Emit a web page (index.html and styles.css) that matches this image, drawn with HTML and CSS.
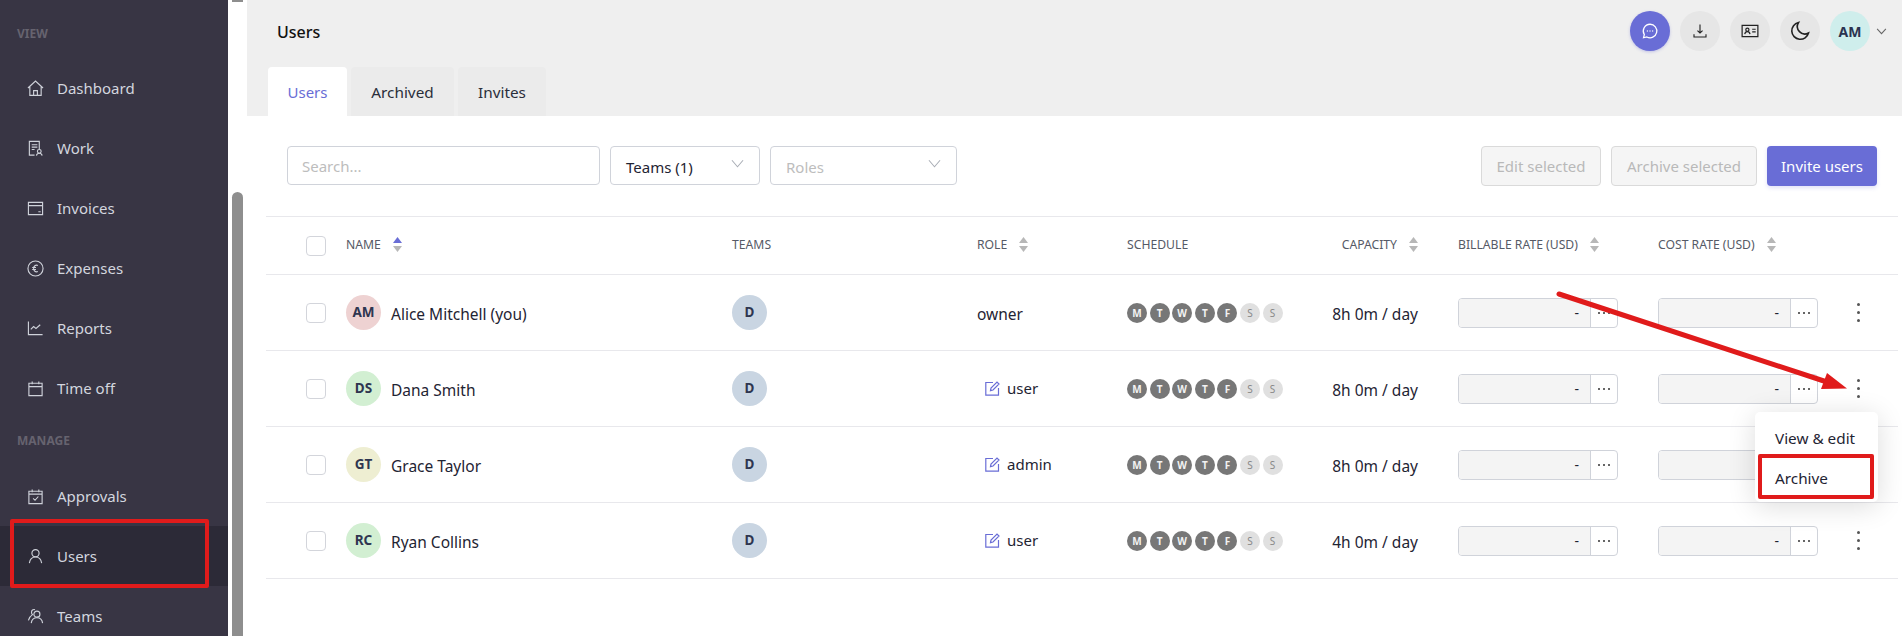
FILE: index.html
```html
<!DOCTYPE html>
<html lang="en">
<head>
    <meta charset="UTF-8">
    <title>Users</title>
    <link rel="stylesheet" href="styles.css">
</head>
<body>
<div class="page">
    <aside class="sidebar">
        <div class="nav-label nav-label-view">VIEW</div>
        <a class="nav-item"><svg class="nav-icon" viewBox="0 0 18 18"><path d="M1 8.500 9 1.200l8 7.300M3 7v9.300h12V7M7 16.300v-5h4v5"/></svg>Dashboard</a>
        <a class="nav-item"><svg class="nav-icon" viewBox="0 0 18 18"><path d="M8 16H2.500V1.500h10.500v8M5 5h6M5 7.500h6M5 10h3"/><circle cx="13" cy="12" r="2"/><path d="M10 16.500c.3-2 1.500-2.500 3-2.500s2.700.5 3 2.500"/></svg>Work</a>
        <a class="nav-item"><svg class="nav-icon" viewBox="0 0 18 18"><path d="M1.500 2.500h15v13h-15zM1.500 6h15M12 12.500h2.500"/></svg>Invoices</a>
        <a class="nav-item"><svg class="nav-icon" viewBox="0 0 18 18"><circle cx="9" cy="9" r="8"/><path d="M11.500 5.800C9 4.700 7 6.500 7 9s2 4.300 4.500 3.200M5.500 8h4M5.500 10h4"/></svg>Expenses</a>
        <a class="nav-item"><svg class="nav-icon" viewBox="0 0 18 18"><path d="M1.500 1.500v14h15M4 10l3-3 2.500 2 4.500-4"/></svg>Reports</a>
        <a class="nav-item"><svg class="nav-icon" viewBox="0 0 18 18"><path d="M2 3.500h14v13H2zM2 7h14M5.500 1.500v3M12.500 1.500v3"/></svg>Time off</a>
        <div class="nav-label">MANAGE</div>
        <a class="nav-item"><svg class="nav-icon" viewBox="0 0 18 18"><path d="M2 3.500h14v13H2zM2 6.500h14M5.500 1.500v3M12.500 1.500v3M6.500 11l2 2 3.500-4"/></svg>Approvals</a>
        <a class="nav-item nav-item-active"><svg class="nav-icon" viewBox="0 0 18 18"><circle cx="9" cy="5.500" r="3.800"/><path d="M2.500 16c.5-4 3-6.500 6.500-6.500s6 2.500 6.500 6.500"/></svg>Users</a>
        <a class="nav-item"><svg class="nav-icon" viewBox="0 0 18 18"><circle cx="10.500" cy="6.500" r="3.200"/><path d="M4.500 16c.4-3.500 2.700-5.700 6-5.700s5.600 2.200 6 5.700M8.500 1.800C6.500 1 4.500 2.500 4.800 5c.1 1 .5 1.500 1 2C3.500 8.500 2 10.500 1.500 13"/></svg>Teams</a>
    </aside>

    <div class="scrollbar">
        <div class="scrollbar-top"></div>
        <div class="scrollbar-thumb"></div>
    </div>

    <main class="content">
        <header class="topbar">
            <div class="topbar-row">
                <h1 class="page-title">Users</h1>
                <div class="topbar-actions">
                    <button class="round-btn round-btn-primary"><svg viewBox="0 0 20 20" width="18" height="18"><path class="icon-line-light" d="M10 2.500a7.500 7.500 0 1 1-3.500 14.100L2.800 17.500l.9-3.500A7.500 7.500 0 0 1 10 2.500z"/><path class="icon-dots-light" d="M6.500 10h1M9.500 10h1M12.500 10h1"/></svg></button>
                    <button class="round-btn"><svg viewBox="0 0 20 20" width="16" height="16"><path class="icon-line" d="M10 2v10M6.800 9.500 10 12.500l3.200-3M2.500 14v3.500h15V14"/></svg></button>
                    <button class="round-btn"><svg viewBox="0 0 20 16" width="18" height="14"><path class="icon-line" d="M1 1.500h18v13H1z"/><circle class="icon-line" cx="7" cy="6.500" r="1.800"/><path class="icon-line" d="M4 11.500c.3-2 1.500-2.800 3-2.800s2.700.8 3 2.800M12.500 6h4M12.500 9h4"/></svg></button>
                    <button class="round-btn"><svg viewBox="0 0 20 20" width="20" height="20"><path class="icon-line-bold" d="M8.500 1.500a8.500 8.500 0 1 0 10 10.500A7.500 7.500 0 0 1 8.500 1.500z"/></svg></button>
                    <div class="round-btn user-badge">AM</div>
                    <svg class="user-chevron" viewBox="0 0 12 8" width="11" height="7"><path d="M1 1l5 5.500L11 1"/></svg>
                </div>
            </div>
            <nav class="tabs">
                <a class="tab tab-users">Users</a>
                <a class="tab tab-archived">Archived</a>
                <a class="tab tab-invites">Invites</a>
            </nav>
        </header>

        <section class="panel">
            <div class="toolbar">
                <input class="search" type="text" placeholder="Search...">
                <div class="select select-teams"><span>Teams (1)</span><svg class="select-arrow" viewBox="0 0 14 9" width="13" height="9"><path d="M1 1l6 7 6-7"/></svg></div>
                <div class="select select-roles"><span class="select-placeholder">Roles</span><svg class="select-arrow" viewBox="0 0 14 9" width="13" height="9"><path d="M1 1l6 7 6-7"/></svg></div>
                <div class="toolbar-actions">
                    <button class="btn btn-disabled btn-edit">Edit selected</button>
                    <button class="btn btn-disabled btn-archive">Archive selected</button>
                    <button class="btn btn-primary">Invite users</button>
                </div>
            </div>

            <div class="table">
                <div class="row row-head">
                    <span class="checkbox"></span>
                    <span class="th">NAME<svg class="sort" viewBox="0 0 9 15"><path class="sort-on" d="M4.500 0 9 6H0z"/><path d="M0 9h9l-4.500 6z"/></svg></span>
                    <span class="th">TEAMS</span>
                    <span class="th">ROLE<svg class="sort" viewBox="0 0 9 15"><path d="M4.500 0 9 6H0z"/><path d="M0 9h9l-4.500 6z"/></svg></span>
                    <span class="th">SCHEDULE</span>
                    <span class="th th-capacity">CAPACITY<svg class="sort" viewBox="0 0 9 15"><path d="M4.500 0 9 6H0z"/><path d="M0 9h9l-4.500 6z"/></svg></span>
                    <span class="th">BILLABLE RATE (USD)<svg class="sort" viewBox="0 0 9 15"><path d="M4.500 0 9 6H0z"/><path d="M0 9h9l-4.500 6z"/></svg></span>
                    <span class="th">COST RATE (USD)<svg class="sort" viewBox="0 0 9 15"><path d="M4.500 0 9 6H0z"/><path d="M0 9h9l-4.500 6z"/></svg></span>
                </div>

                <div class="row">
                    <span class="checkbox"></span>
                    <div class="name-cell"><span class="avatar avatar-red">AM</span><span class="cell-text">Alice Mitchell (you)</span></div>
                    <span class="avatar avatar-blue">D</span>
                    <span class="cell-text">owner</span>
                    <div class="days"><i>M</i><i>T</i><i>W</i><i>T</i><i>F</i><i class="off">S</i><i class="off">S</i></div>
                    <span class="cell-text capacity">8h 0m / day</span>
                    <div class="rate"><span class="rate-value">-</span><span class="rate-more"><b></b><b></b><b></b></span></div>
                    <div class="rate"><span class="rate-value">-</span><span class="rate-more"><b></b><b></b><b></b></span></div>
                    <span class="kebab"><b></b><b></b><b></b></span>
                </div>

                <div class="row">
                    <span class="checkbox"></span>
                    <div class="name-cell"><span class="avatar avatar-green">DS</span><span class="cell-text">Dana Smith</span></div>
                    <span class="avatar avatar-blue">D</span>
                    <span class="role-edit"><svg viewBox="0 0 15 15" width="15" height="15"><path d="M8 1.500H.8v12.700h12.700V7M5.500 9.700l.5-2.700L12 1l2 2-6 6z"/></svg>user</span>
                    <div class="days"><i>M</i><i>T</i><i>W</i><i>T</i><i>F</i><i class="off">S</i><i class="off">S</i></div>
                    <span class="cell-text capacity">8h 0m / day</span>
                    <div class="rate"><span class="rate-value">-</span><span class="rate-more"><b></b><b></b><b></b></span></div>
                    <div class="rate"><span class="rate-value">-</span><span class="rate-more"><b></b><b></b><b></b></span></div>
                    <span class="kebab"><b></b><b></b><b></b></span>
                </div>

                <div class="row">
                    <span class="checkbox"></span>
                    <div class="name-cell"><span class="avatar avatar-yellow">GT</span><span class="cell-text">Grace Taylor</span></div>
                    <span class="avatar avatar-blue">D</span>
                    <span class="role-edit"><svg viewBox="0 0 15 15" width="15" height="15"><path d="M8 1.500H.8v12.700h12.700V7M5.500 9.700l.5-2.700L12 1l2 2-6 6z"/></svg>admin</span>
                    <div class="days"><i>M</i><i>T</i><i>W</i><i>T</i><i>F</i><i class="off">S</i><i class="off">S</i></div>
                    <span class="cell-text capacity">8h 0m / day</span>
                    <div class="rate"><span class="rate-value">-</span><span class="rate-more"><b></b><b></b><b></b></span></div>
                    <!-- value of this one sits under the open menu -->
                    <div class="rate"><span class="rate-value"></span><span class="rate-more"></span></div>
                    <span class="kebab"><b></b><b></b><b></b></span>
                </div>

                <div class="row">
                    <span class="checkbox"></span>
                    <div class="name-cell"><span class="avatar avatar-green">RC</span><span class="cell-text">Ryan Collins</span></div>
                    <span class="avatar avatar-blue">D</span>
                    <span class="role-edit"><svg viewBox="0 0 15 15" width="15" height="15"><path d="M8 1.500H.8v12.700h12.700V7M5.500 9.700l.5-2.700L12 1l2 2-6 6z"/></svg>user</span>
                    <div class="days"><i>M</i><i>T</i><i>W</i><i>T</i><i>F</i><i class="off">S</i><i class="off">S</i></div>
                    <span class="cell-text capacity">4h 0m / day</span>
                    <div class="rate"><span class="rate-value">-</span><span class="rate-more"><b></b><b></b><b></b></span></div>
                    <div class="rate"><span class="rate-value">-</span><span class="rate-more"><b></b><b></b><b></b></span></div>
                    <span class="kebab"><b></b><b></b><b></b></span>
                </div>
            </div>
        </section>
    </main>

    <!-- Row menu, open on Dana Smith -->
    <div class="row-menu">
        <a class="row-menu-item">View &amp; edit</a>
        <a class="row-menu-item">Archive</a>
    </div>

    <!-- Red annotations drawn on top of the screenshot -->
    <div class="mark mark-users"></div>
    <div class="mark mark-archive"></div>
    <svg class="mark-arrow" viewBox="0 0 1902 636" width="1902" height="636">
        <path class="arrow-line" d="M1559 294 1830 383"/>
        <path class="arrow-head" d="M1847 388.500 1827 373 1821 389z"/>
    </svg>
</div>
</body>
</html>
```

FILE: styles.css
```css
* {
    box-sizing: border-box;
}
body {
    margin: 0;
    font-family: "Noto Sans", Arial, sans-serif;
    font-size: 15px;
    color: #1f2433;
    background: #fff;
}
.page {
    position: relative;
    display: flex;
    width: 1902px;
    height: 636px;
    overflow: hidden;
}

/* Sidebar */
.sidebar {
    flex: 0 0 228px;
    height: 636px;
    background: #383544;
    color: #d3d6df;
    overflow: hidden;
}
.nav-label {
    height: 48px;
    padding: 15px 0 0 17px;
    font-size: 12px;
    font-weight: 700;
    line-height: 16px;
    color: #66636f;
}
.nav-label-view {
    height: 58px;
    padding-top: 26px;
}
.nav-item {
    display: flex;
    align-items: center;
    gap: 13px;
    height: 60px;
    padding-left: 27px;
    font-size: 15px;
}
.nav-item-active {
    background: #2c2a37;
}
.nav-icon {
    flex: 0 0 17px;
    width: 17px;
    height: 17px;
    fill: none;
    stroke: #cfd2da;
    stroke-width: 1.2;
}

/* Fake page scrollbar */
.scrollbar {
    flex: 0 0 19px;
    padding-left: 4px;
}
.scrollbar-top {
    width: 11px;
    height: 2px;
    background: #8e8e8e;
}
.scrollbar-thumb {
    width: 11px;
    height: 460px;
    margin-top: 190px;
    border-radius: 6px 6px 0 0;
    background: #8e8e8e;
}

/* Top bar and tabs */
.content {
    flex: 1;
    min-width: 0;
}
.topbar {
    height: 116px;
    padding-left: 21px;
    background: #efefef;
}
.topbar-row {
    display: flex;
    justify-content: space-between;
    height: 67px;
    padding-top: 11px;
}
.page-title {
    margin: 9px 0 0 9px;
    font-size: 16px;
    font-weight: 500;
    line-height: 24px;
    color: #111;
}
.topbar-actions {
    display: flex;
    align-items: flex-start;
    gap: 10px;
    padding-right: 15px;
}
.round-btn {
    display: flex;
    align-items: center;
    justify-content: center;
    width: 40px;
    height: 40px;
    padding: 0;
    border: none;
    border-radius: 50%;
    background: #e6e6e6;
}
.round-btn-primary {
    background: #696dd6;
    box-shadow: 0 1px 3px rgba(105,109,214,0.35);
}
.icon-line,
.icon-line-light,
.icon-line-bold,
.icon-dots-light {
    fill: none;
    stroke: #222;
    stroke-width: 1.4;
}
.icon-line-bold {
    stroke-width: 1.6;
}
.icon-line-light {
    stroke: #fff;
}
.icon-dots-light {
    stroke: #fff;
    stroke-width: 1.8;
}
.user-badge {
    font-size: 14px;
    font-weight: 700;
    color: #2b3350;
    background: #cfeeec;
}
.user-chevron {
    margin: 17px 0 0 -4px;
    fill: none;
    stroke: #666;
    stroke-width: 1.2;
}
.tabs {
    display: flex;
    gap: 4px;
    height: 49px;
}
.tab {
    display: flex;
    align-items: center;
    justify-content: center;
    height: 49px;
    border-radius: 4px 4px 0 0;
    font-size: 15.300px;
    background: #ebebeb;
    color: #2a2e3a;
}
.tab-users {
    width: 79px;
    font-size: 15px;
    background: #fff;
    color: #696dd6;
}
.tab-archived {
    width: 103px;
}
.tab-invites {
    width: 88px;
}

/* Filters */
.panel {
    padding: 30px 4px 0 19px;
}
.toolbar {
    display: flex;
    gap: 10px;
    height: 70px;
    padding-left: 21px;
    padding-right: 21px;
}
.search,
.select {
    height: 39px;
    border: 1px solid #d0d3da;
    border-radius: 4px;
    background: #fff;
    font-family: inherit;
    font-size: 15px;
}
.search {
    width: 313px;
    padding: 0 14px;
    outline: none;
}
.search::placeholder,
.select-placeholder {
    color: #bdbdbd;
}
.select {
    display: flex;
    align-items: center;
    justify-content: space-between;
    padding: 2px 15px 0;
}
.select-teams {
    width: 150px;
}
.select-roles {
    width: 187px;
}
.select-arrow {
    margin-top: -6px;
    fill: none;
    stroke: #a9adb5;
    stroke-width: 1.1;
}
.toolbar-actions {
    display: flex;
    gap: 10px;
    margin-left: auto;
}
.btn {
    height: 40px;
    padding: 0;
    border-radius: 4px;
    font-family: inherit;
    font-size: 15px;
}
.btn-disabled {
    border: 1px solid #dadada;
    background: #f5f5f5;
    color: #b9b9b9;
}
.btn-edit {
    width: 120px;
}
.btn-archive {
    width: 146px;
}
.btn-primary {
    width: 110px;
    border: none;
    background: #696dd6;
    color: #fff;
    box-shadow: 0 2px 4px rgba(105,109,214,0.2);
}

/* Users table */
.table {
    border-top: 1px solid #e8e8ec;
}
.row {
    display: grid;
    grid-template-columns: 40px 386px 245px 150px 183px 148px 200px 182px 36px;
    align-items: center;
    height: 76px;
    padding-left: 40px;
    border-bottom: 1px solid #e8e8ec;
}
.row-head {
    height: 58px;
}
.checkbox {
    display: block;
    width: 20px;
    height: 20px;
    border: 1px solid #d3d5db;
    border-radius: 4px;
    background: #fff;
}
.th {
    display: flex;
    align-items: center;
    gap: 12px;
    padding-bottom: 2px;
    font-size: 12.200px;
    color: #565a66;
}
.th-capacity {
    justify-content: flex-end;
    padding-right: 40px;
}
.sort {
    flex: 0 0 9px;
    width: 9px;
    height: 15px;
    fill: #b7b7b7;
}
.sort-on {
    fill: #696dd6;
}
.name-cell {
    display: flex;
    align-items: center;
    gap: 10px;
}
.cell-text {
    padding-top: 3px;
    font-size: 15.500px;
}
.avatar {
    display: flex;
    align-items: center;
    justify-content: center;
    width: 35px;
    height: 35px;
    padding-bottom: 2px;
    border-radius: 50%;
    font-size: 13.500px;
    font-weight: 700;
    color: #2f3650;
}
.avatar-red { background: #eed2d2; }
.avatar-green { background: #d2efd2; }
.avatar-yellow { background: #eeeed2; }
.avatar-blue { background: #c9d5e2; }
.role-edit {
    display: flex;
    align-items: center;
    gap: 7px;
    padding-left: 8px;
    padding-bottom: 1px;
    font-size: 15px;
}
.role-edit svg {
    fill: none;
    stroke: #696dd6;
    stroke-width: 1.2;
}
.days {
    display: flex;
    gap: 2.600px;
}
.days i {
    display: flex;
    align-items: center;
    justify-content: center;
    width: 20px;
    height: 20px;
    border-radius: 50%;
    font-size: 10px;
    font-style: normal;
    font-weight: 700;
    color: #f2f2f2;
    background: #777;
}
.days i.off {
    font-weight: 400;
    color: #888;
    background: #e0e0e0;
}
.capacity {
    padding-right: 40px;
    text-align: right;
}
.rate {
    display: flex;
    width: 160px;
    height: 30px;
    border: 1px solid #d0d3da;
    border-radius: 4px;
    overflow: hidden;
}
.rate-value {
    flex: 1;
    padding-right: 11px;
    font-size: 14px;
    line-height: 28px;
    text-align: right;
    background: #f4f4f4;
    border-right: 1px solid #d0d3da;
}
.rate-more {
    display: flex;
    flex: 0 0 26px;
    align-items: center;
    justify-content: center;
    gap: 3px;
}
.rate-more b {
    width: 2px;
    height: 2px;
    border-radius: 50%;
    background: #333;
}
.kebab {
    display: flex;
    flex-direction: column;
    align-items: center;
    gap: 5px;
}
.kebab b {
    width: 3px;
    height: 3px;
    border-radius: 50%;
    background: #555;
}

/* Row menu */
.row-menu {
    position: absolute;
    left: 1755px;
    top: 412px;
    width: 123px;
    height: 90px;
    padding-top: 6px;
    border-radius: 5px;
    background: #fff;
    box-shadow: 0 4px 28px rgba(0,0,0,0.14);
}
.row-menu-item {
    display: flex;
    align-items: center;
    height: 40px;
    padding-left: 20px;
    font-size: 15.300px;
}

/* Annotations */
.mark {
    position: absolute;
    border: 4px solid #e01b1b;
    border-radius: 2px;
}
.mark-users {
    left: 10px;
    top: 519px;
    width: 199px;
    height: 69px;
}
.mark-archive {
    left: 1758px;
    top: 454px;
    width: 116px;
    height: 45px;
}
.mark-arrow {
    position: absolute;
    left: 0;
    top: 0;
    pointer-events: none;
}
.arrow-line {
    fill: none;
    stroke: #e01b1b;
    stroke-width: 5;
    stroke-linecap: round;
}
.arrow-head {
    fill: #e01b1b;
}
```
